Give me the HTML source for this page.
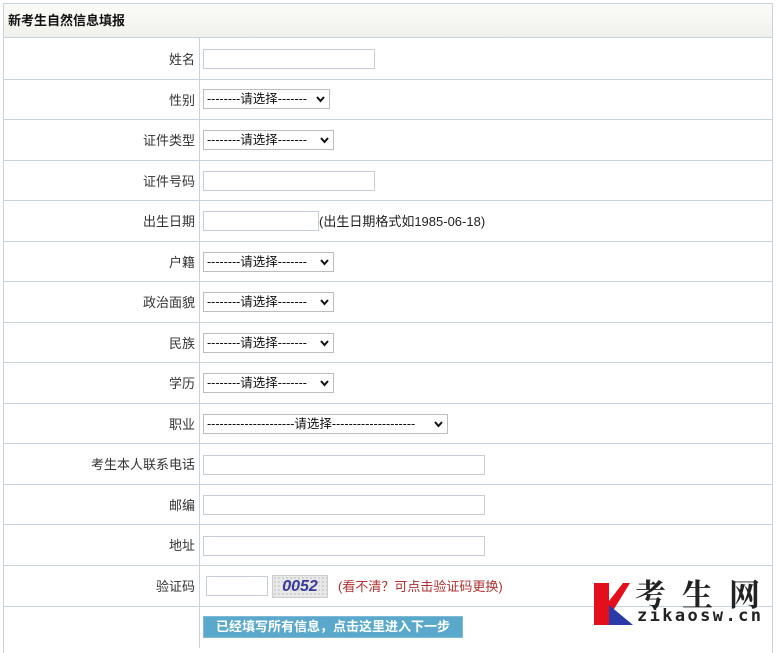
<!DOCTYPE html>
<html><head><meta charset="utf-8"><style>
*{margin:0;padding:0;box-sizing:border-box}
body{width:776px;height:641px;background:#fff;font-family:"Liberation Sans","Noto Sans CJK SC",sans-serif;font-size:13px;color:#222;position:relative;overflow:hidden}
.frame{position:absolute;left:3px;top:3px;width:770px;height:650px;border:1px solid #c9d3dc;border-bottom:none}
.hd{position:absolute;left:4px;top:4px;width:768px;height:34px;background:linear-gradient(#fbfbf8,#f1f1ec);border-bottom:1px solid #c9d3dc;font-weight:bold;font-size:13px;line-height:34px;padding-left:4px;color:#111}
.vl{position:absolute;left:199px;top:38px;width:1px;height:610px;background:#c9d3dc}
.line{position:absolute;left:4px;width:768px;height:1px;background:#c9d3dc}
.lb{position:absolute;right:581px;text-align:right;white-space:nowrap;line-height:20px;margin-top:2px;color:#333}
.in{position:absolute;left:203px;height:20px;border:1px solid #c6cdd4;background:#fff}
.sel{position:absolute;left:203px;height:20px;border:1px solid #bdbdbd;background:#fff;font-size:12.5px;line-height:18px;padding-left:3px;white-space:nowrap;color:#111}
.sel svg{position:absolute;right:4px;top:6px}
.btn{position:absolute;left:203px;top:616px;width:260px;height:22px;background:#5aa9cc;border:1px solid #7fb9d3;color:#fff;font-weight:bold;font-size:13px;line-height:20px;text-align:center}
</style></head><body>
<div class="frame"></div>
<div class="hd">新考生自然信息填报</div>
<div class="vl"></div>
<div class="line" style="top:79px"></div>
<div class="line" style="top:119px"></div>
<div class="line" style="top:160px"></div>
<div class="line" style="top:200px"></div>
<div class="line" style="top:241px"></div>
<div class="line" style="top:281px"></div>
<div class="line" style="top:322px"></div>
<div class="line" style="top:362px"></div>
<div class="line" style="top:403px"></div>
<div class="line" style="top:443px"></div>
<div class="line" style="top:484px"></div>
<div class="line" style="top:524px"></div>
<div class="line" style="top:565px"></div>
<div class="line" style="top:606px"></div>

<div class="lb" style="top:48px">姓名</div>
<div class="in" style="top:49px;width:172px"></div>

<div class="lb" style="top:89px">性别</div>
<div class="sel" style="top:89px;width:127px">--------请选择-------<svg width="9" height="7"><path d="M1 1L4.5 5L8 1" stroke="#111" stroke-width="2" fill="none"/></svg></div>

<div class="lb" style="top:129px">证件类型</div>
<div class="sel" style="top:130px;width:131px">--------请选择-------<svg width="9" height="7"><path d="M1 1L4.5 5L8 1" stroke="#111" stroke-width="2" fill="none"/></svg></div>

<div class="lb" style="top:170px">证件号码</div>
<div class="in" style="top:171px;width:172px"></div>

<div class="lb" style="top:210px">出生日期</div>
<div class="in" style="top:211px;width:116px"></div>
<div style="position:absolute;left:319px;top:212px;line-height:20px">(出生日期格式如1985-06-18)</div>

<div class="lb" style="top:251px">户籍</div>
<div class="sel" style="top:252px;width:131px">--------请选择-------<svg width="9" height="7"><path d="M1 1L4.5 5L8 1" stroke="#111" stroke-width="2" fill="none"/></svg></div>

<div class="lb" style="top:291px">政治面貌</div>
<div class="sel" style="top:292px;width:131px">--------请选择-------<svg width="9" height="7"><path d="M1 1L4.5 5L8 1" stroke="#111" stroke-width="2" fill="none"/></svg></div>

<div class="lb" style="top:332px">民族</div>
<div class="sel" style="top:333px;width:131px">--------请选择-------<svg width="9" height="7"><path d="M1 1L4.5 5L8 1" stroke="#111" stroke-width="2" fill="none"/></svg></div>

<div class="lb" style="top:372px">学历</div>
<div class="sel" style="top:373px;width:131px">--------请选择-------<svg width="9" height="7"><path d="M1 1L4.5 5L8 1" stroke="#111" stroke-width="2" fill="none"/></svg></div>

<div class="lb" style="top:413px">职业</div>
<div class="sel" style="top:414px;width:245px">---------------------请选择--------------------<svg width="9" height="7"><path d="M1 1L4.5 5L8 1" stroke="#111" stroke-width="2" fill="none"/></svg></div>

<div class="lb" style="top:453px">考生本人联系电话</div>
<div class="in" style="top:455px;width:282px"></div>

<div class="lb" style="top:494px">邮编</div>
<div class="in" style="top:495px;width:282px"></div>

<div class="lb" style="top:534px">地址</div>
<div class="in" style="top:536px;width:282px"></div>

<div class="lb" style="top:575px">验证码</div>
<div class="in" style="left:206px;top:576px;width:62px"></div>
<div style="position:absolute;left:272px;top:575px;width:56px;height:23px;background:#e8e8e8;background-image:radial-gradient(#999 0.6px,transparent 0.8px);background-size:4px 4px;border:1px solid #ccc;font-style:italic;font-weight:bold;color:#3a3a9a;font-size:16px;line-height:21px;text-align:center;font-family:'Liberation Sans',sans-serif">0052</div>
<div style="position:absolute;left:338px;top:577px;line-height:20px;color:#b03030">(看不清？可点击验证码更换)</div>

<div class="btn">已经填写所有信息，点击这里进入下一步</div>

<svg style="position:absolute;left:592px;top:581px" width="44" height="46">
<polygon points="2,2 17,2 17,44 2,44" fill="#e3101c"/>
<polygon points="17,20 31,2 38,2 22,28 17,28" fill="#e3101c"/>
<polygon points="17,24 41,44 17,44" fill="#2a3aa8"/>
</svg>
<div style="position:absolute;left:635px;top:576px;font-family:'Noto Serif CJK SC',serif;font-weight:bold;font-size:31px;line-height:34px;letter-spacing:16px;color:#222;white-space:nowrap">考生网</div>
<div style="position:absolute;left:637px;top:606px;font-family:'DejaVu Sans Mono','Liberation Mono',monospace;font-size:17px;line-height:20px;letter-spacing:2.4px;color:#222;font-weight:bold">zikaosw.cn</div>
</body></html>
